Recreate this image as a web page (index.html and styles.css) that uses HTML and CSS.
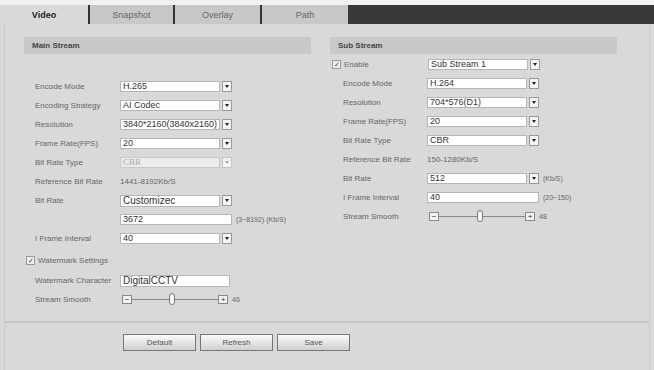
FILE: index.html
```html
<!DOCTYPE html>
<html lang="en">
<head>
    <meta charset="UTF-8">
    <meta name="viewport" content="width=device-width, initial-scale=1.0">
    <title>Video Settings</title>
    <link rel="stylesheet" href="styles.css">
</head>
<body>
    <div class="top-strip"></div>
    <div class="tabs">
        <div class="tab active">Video</div>
        <div class="tab">Snapshot</div>
        <div class="tab">Overlay</div>
        <div class="tab">Path</div>
        <div class="tabs-fill"></div>
    </div>
    <div class="panel">
        <div class="streams">
            <div class="stream main">
                <div class="stream-head">Main Stream</div>
                <div class="rows">
                    <div class="row"><span class="lbl">Encode Mode</span><div class="sel"><span class="box">H.265</span><span class="btn"></span></div></div>
                    <div class="row"><span class="lbl">Encoding Strategy</span><div class="sel"><span class="box">AI Codec</span><span class="btn"></span></div></div>
                    <div class="row"><span class="lbl">Resolution</span><div class="sel"><span class="box">3840*2160(3840x2160)</span><span class="btn"></span></div></div>
                    <div class="row"><span class="lbl">Frame Rate(FPS)</span><div class="sel"><span class="box">20</span><span class="btn"></span></div></div>
                    <div class="row"><span class="lbl">Bit Rate Type</span><div class="sel disabled"><span class="box">CBR</span><span class="btn"></span></div></div>
                    <div class="row"><span class="lbl">Reference Bit Rate</span><span class="val">1441-8192Kb/S</span></div>
                    <div class="row"><span class="lbl">Bit Rate</span><div class="sel big"><span class="box">Customizec</span><span class="btn"></span></div></div>
                    <div class="row"><span class="lbl"></span><span class="input">3672</span><span class="unit">(3~8192) (Kb/S)</span></div>
                    <div class="row"><span class="lbl">I Frame Interval</span><div class="sel"><span class="box">40</span><span class="btn"></span></div></div>
                    <div class="row check-row"><span class="chk">&#10003;</span><span>Watermark Settings</span></div>
                    <div class="row"><span class="lbl">Watermark Character</span><span class="input big">DigitalCCTV</span></div>
                    <div class="row">
                        <span class="lbl">Stream Smooth</span>
                        <div class="slider">
                            <span class="step">&minus;</span>
                            <span class="track"><span class="thumb" style="left: 46%"></span></span>
                            <span class="step">+</span>
                        </div>
                        <span class="unit">46</span>
                    </div>
                </div>
            </div>
            <div class="stream sub">
                <div class="stream-head">Sub Stream</div>
                <div class="rows">
                    <div class="row check-row"><span class="chk">&#10003;</span><span class="lbl">Enable</span><div class="sel"><span class="box">Sub Stream 1</span><span class="btn"></span></div></div>
                    <div class="row"><span class="lbl">Encode Mode</span><div class="sel"><span class="box">H.264</span><span class="btn"></span></div></div>
                    <div class="row"><span class="lbl">Resolution</span><div class="sel"><span class="box">704*576(D1)</span><span class="btn"></span></div></div>
                    <div class="row"><span class="lbl">Frame Rate(FPS)</span><div class="sel"><span class="box">20</span><span class="btn"></span></div></div>
                    <div class="row"><span class="lbl">Bit Rate Type</span><div class="sel"><span class="box">CBR</span><span class="btn"></span></div></div>
                    <div class="row"><span class="lbl">Reference Bit Rate</span><span class="val">150-1280Kb/S</span></div>
                    <div class="row"><span class="lbl">Bit Rate</span><div class="sel"><span class="box">512</span><span class="btn"></span></div><span class="unit">(Kb/S)</span></div>
                    <div class="row"><span class="lbl">I Frame Interval</span><span class="input">40</span><span class="unit">(20~150)</span></div>
                    <div class="row">
                        <span class="lbl">Stream Smooth</span>
                        <div class="slider">
                            <span class="step">&minus;</span>
                            <span class="track"><span class="thumb" style="left: 48%"></span></span>
                            <span class="step">+</span>
                        </div>
                        <span class="unit">48</span>
                    </div>
                </div>
            </div>
        </div>
        <div class="actions">
            <button class="act">Default</button>
            <button class="act">Refresh</button>
            <button class="act">Save</button>
        </div>
    </div>
</body>
</html>
```

FILE: styles.css
```css
body {
    margin: 0;
    background-color: #d9d9d9;
    font-family: "Liberation Sans", Arial, sans-serif;
    font-size: 8px;
    color: #666;
}
.top-strip {
    height: 5px;
    background-color: #f1f1f1;
}
.tabs {
    display: flex;
    height: 19px;
    background-color: #c8c8c8;
}
.tab {
    display: flex;
    align-items: center;
    justify-content: center;
    font-size: 9px;
    color: #666;
    border-right: 2px solid #333;
}
.tab:nth-child(1) { width: 88px; }
.tab:nth-child(2) { width: 83px; }
.tab:nth-child(3) { width: 85px; }
.tab:nth-child(4) { width: 86px; border-right: none; }
.tab.active {
    background-color: #dadada;
    color: #222;
    font-weight: bold;
}
.tabs-fill {
    flex: 1;
    background-color: #383838;
}
.panel {
    margin: 0 4px;
    height: 346px;
    border-left: 1px solid #cbcbcb;
    border-right: 1px solid #cbcbcb;
}
.streams {
    display: grid;
    grid-template-columns: 287px 287px;
    column-gap: 19px;
    padding: 13px 0 0 19px;
    height: 284px;
    border-bottom: 2px solid #c6c6c6;
}
.stream-head {
    height: 17px;
    line-height: 17px;
    padding-left: 8px;
    background-color: #c9c9c9;
    font-weight: bold;
    color: #444;
}
.main .rows {
    padding: 23px 0 0 11px;
}
.sub .rows {
    padding: 1px 0 0 13px;
}
.row {
    display: flex;
    align-items: center;
    height: 19px;
}
.lbl {
    width: 85px;
    flex-shrink: 0;
}
.sub .lbl {
    width: 84px;
}
.check-row {
    margin-left: -9px;
}
.sub .check-row {
    margin-left: -11px;
}
.main .check-row {
    height: 21px;
    margin-top: 2px;
}
.sub .check-row .lbl {
    width: 84px;
}
.chk {
    width: 7px;
    height: 7px;
    margin-right: 3px;
    border: 1px solid #999;
    background-color: #eee;
    font-size: 7px;
    line-height: 7px;
    text-align: center;
    color: #444;
}
.sel {
    display: flex;
    gap: 2px;
}
.box, .input {
    box-sizing: border-box;
    width: 100px;
    height: 11px;
    line-height: 9px;
    padding-left: 2px;
    background-color: #fff;
    border: 1px solid #b5b5b5;
    font-size: 9px;
    color: #333;
    white-space: nowrap;
    overflow: hidden;
}
.input {
    width: 112px;
}
.big .box, .input.big {
    height: 12px;
    line-height: 10px;
    font-size: 10px;
}
.input.big {
    width: 110px;
}
.btn {
    box-sizing: border-box;
    width: 10px;
    height: 11px;
    background-color: #f4f4f4;
    border: 1px solid #999;
    position: relative;
}
.btn::after {
    content: "";
    position: absolute;
    left: 2px;
    top: 3px;
    border-left: 2px solid transparent;
    border-right: 2px solid transparent;
    border-top: 3px solid #222;
}
.disabled .box {
    background-color: #ececec;
    border-color: #c9c9c9;
    color: #aaa;
    font-family: "Liberation Serif", serif;
}
.disabled .btn {
    border-color: #c4c4c4;
}
.disabled .btn::after {
    border-top-color: #aaa;
}
.val {
    color: #666;
}
.unit {
    margin-left: 4px;
    font-size: 7px;
    color: #666;
}
.slider {
    display: flex;
    align-items: center;
    width: 106px;
    margin-left: 2px;
}
.step {
    box-sizing: border-box;
    width: 10px;
    height: 9px;
    border: 1px solid #888;
    background-color: #f2f2f2;
    font-size: 8px;
    line-height: 7px;
    text-align: center;
    color: #333;
}
.track {
    flex: 1;
    height: 1px;
    background-color: #888;
    position: relative;
}
.thumb {
    position: absolute;
    top: -6px;
    width: 6px;
    height: 12px;
    margin-left: -3px;
    box-sizing: border-box;
    border: 1px solid #777;
    border-radius: 3px;
    background-color: #f8f8f8;
}
.actions {
    display: flex;
    gap: 4px;
    padding: 11px 0 0 118px;
}
.act {
    width: 73px;
    height: 17px;
    padding: 0;
    border: 1px solid #777;
    background: linear-gradient(#fafafa, #d0d0d0);
    font-family: "Liberation Sans", Arial, sans-serif;
    font-size: 8px;
    color: #555;
}
```
